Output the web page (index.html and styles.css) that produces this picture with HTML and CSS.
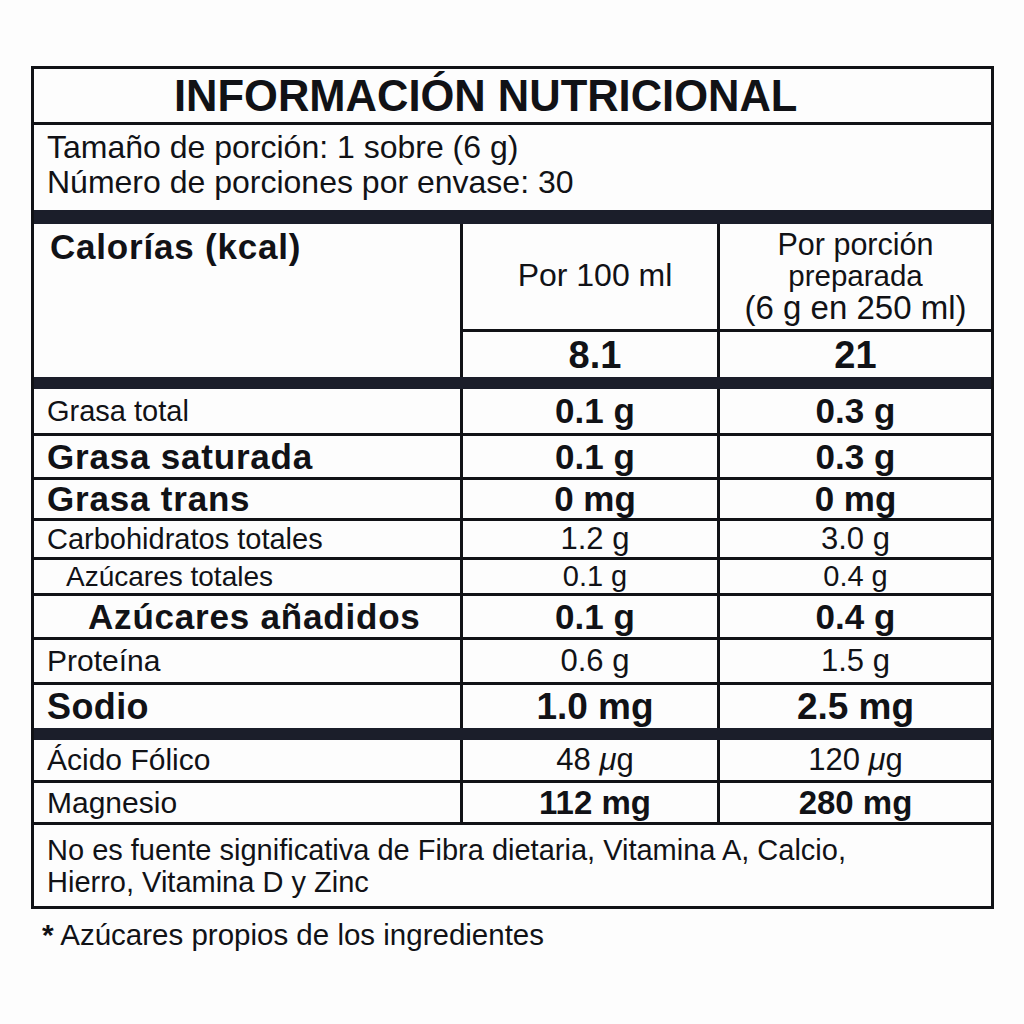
FILE: index.html
```html
<!DOCTYPE html>
<html lang="es">
<head>
<meta charset="utf-8">
<title>Información nutricional</title>
<link rel="stylesheet" href="styles.css">
</head>
<body>
<div class="label">
  <div class="title">INFORMACIÓN NUTRICIONAL</div>
  <div class="serving">
    <div>Tamaño de porción: 1 sobre (6 g)</div>
    <div>Número de porciones por envase: 30</div>
  </div>
  <div class="bar"></div>
  <div class="head">
    <div class="cell cal">Calorías (kcal)</div>
    <div class="cell center per100"><span>Por 100 ml</span></div>
    <div class="cell center perportion">
      <div class="l1">Por porción</div>
      <div class="l2">preparada</div>
      <div class="l3">(6 g en 250 ml)</div>
    </div>
    <div class="cell center v2 kcal"><span>8.1</span></div>
    <div class="cell center kcal"><span>21</span></div>
  </div>
  <div class="bar bar-a"></div>
  <div class="grid group-a">
    <div class="cell lab reg29"><span>Grasa total</span></div>
    <div class="cell center v2 bold35"><span>0.1 g</span></div>
    <div class="cell center bold35"><span>0.3 g</span></div>

    <div class="cell lab boldlab"><span>Grasa saturada</span></div>
    <div class="cell center v2 bold35"><span>0.1 g</span></div>
    <div class="cell center bold35"><span>0.3 g</span></div>

    <div class="cell lab boldlab"><span>Grasa trans</span></div>
    <div class="cell center v2 bold35"><span>0 mg</span></div>
    <div class="cell center bold35"><span>0 mg</span></div>

    <div class="cell lab reg29"><span>Carbohidratos totales</span></div>
    <div class="cell center v2 reg31"><span>1.2 g</span></div>
    <div class="cell center reg31"><span>3.0 g</span></div>

    <div class="cell lab reg28 indent1"><span>Azúcares totales</span></div>
    <div class="cell center v2 reg29"><span>0.1 g</span></div>
    <div class="cell center reg29"><span>0.4 g</span></div>

    <div class="cell lab boldlab indent2"><span>Azúcares añadidos</span></div>
    <div class="cell center v2 bold35"><span>0.1 g</span></div>
    <div class="cell center bold35"><span>0.4 g</span></div>

    <div class="cell lab reg30"><span>Proteína</span></div>
    <div class="cell center v2 reg31"><span>0.6 g</span></div>
    <div class="cell center reg31"><span>1.5 g</span></div>

    <div class="cell lab boldlab sodio"><span>Sodio</span></div>
    <div class="cell center v2 bold37"><span>1.0 mg</span></div>
    <div class="cell center bold37"><span>2.5 mg</span></div>
  </div>
  <div class="bar bar-b"></div>
  <div class="grid group-b">
    <div class="cell lab reg30"><span>Ácido Fólico</span></div>
    <div class="cell center v2 reg31"><span>48 <i>μ</i>g</span></div>
    <div class="cell center reg31"><span>120 <i>μ</i>g</span></div>

    <div class="cell lab reg30"><span>Magnesio</span></div>
    <div class="cell center v2 bold33"><span>112 mg</span></div>
    <div class="cell center bold33"><span>280 mg</span></div>
  </div>
  <div class="note">No es fuente significativa de Fibra dietaria, Vitamina A, Calcio,<br>Hierro, Vitamina D y Zinc</div>
</div>
<div class="foot"><b class="star">*</b> Azúcares propios de los ingredientes</div>
</body>
</html>
```

FILE: styles.css
```css
html, body {
  margin: 0;
  padding: 0;
  background: #fdfdfd;
}

body {
  padding: 66px 0 0 31px;
  font-family: "Liberation Sans", Arial, sans-serif;
  color: #111216;
}

.label {
  width: 963px;
  box-sizing: border-box;
  border: 3px solid #111216;
  background: #fdfdfd;
}

.title {
  height: 51px;
  padding: 2px 0 0 140px;
  font-size: 43.5px;
  line-height: 50px;
  font-weight: 700;
  border-bottom: 3px solid #111216;
}

.serving {
  height: 85px;
  box-sizing: border-box;
  padding: 5px 0 0 13px;
  font-size: 32px;
  line-height: 35px;
}

.bar {
  height: 14px;
  background: #1b1e2a;
}

.bar-a {
  height: 12px;
}

.bar-b {
  height: 12px;
}

.head,
.grid {
  display: grid;
  grid-template-columns: 426px 254px 1fr;
  gap: 3px;
  background: #111216;
}

.head {
  grid-template-rows: 105px 45px;
}

.group-a {
  grid-template-rows: 44px 41px 38px 36px 33px 41px 42px 43px;
}

.group-b {
  grid-template-rows: 40px 39px;
}

.cell {
  background: #fdfdfd;
  display: flex;
  align-items: center;
}

.center {
  justify-content: center;
  text-align: center;
}

.v2 {
  padding-left: 10px;
}

.cal {
  grid-row: span 2;
  align-items: flex-start;
  padding: 3px 0 0 16px;
  font-size: 35px;
  line-height: 40px;
  font-weight: 700;
  letter-spacing: 0.8px;
}

.per100 {
  font-size: 32px;
  padding-left: 10px;
  padding-bottom: 2px;
}

.perportion {
  flex-direction: column;
  justify-content: flex-start;
  padding-top: 5px;
  white-space: nowrap;
}

.perportion .l1 {
  font-size: 30.5px;
  line-height: 31px;
}

.perportion .l2 {
  font-size: 29.5px;
  line-height: 31px;
}

.perportion .l3 {
  font-size: 33px;
  line-height: 33px;
}

.kcal {
  font-size: 38px;
  font-weight: 700;
  padding-top: 2px;
}

.lab {
  padding-left: 13px;
}

.indent1 {
  padding-left: 32px;
}

.indent2 {
  padding-left: 54px;
}

.reg28 { font-size: 28px; }
.reg29 { font-size: 29px; }
.reg30 { font-size: 30px; }
.reg31 { font-size: 31px; }

.boldlab {
  font-size: 35px;
  font-weight: 700;
  letter-spacing: 0.8px;
}

.sodio {
  font-size: 36px;
  letter-spacing: 0.4px;
}

.bold33 { font-size: 33px; font-weight: 700; }
.bold35 { font-size: 35px; font-weight: 700; }
.bold37 { font-size: 37px; font-weight: 700; }

.note {
  height: 72px;
  padding: 9px 0 0 13px;
  border-top: 3px solid #111216;
  font-size: 29px;
  line-height: 32px;
}

.foot {
  margin: 10px 0 0 11px;
  font-size: 29.5px;
  line-height: 32px;
}

.star {
  font-weight: 700;
  font-size: 30px;
}
```
